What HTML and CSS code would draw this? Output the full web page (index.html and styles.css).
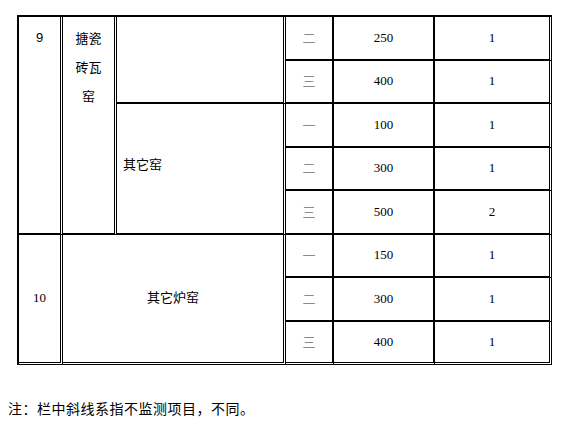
FILE: index.html
```html
<!DOCTYPE html>
<html lang="zh">
<head>
<meta charset="utf-8">
<title>表</title>
<link rel="stylesheet" href="styles.css">
</head>
<body>
<table class="grid">
  <tr>
    <td class="c1 top sans" rowspan="5">9</td>
    <td class="c2 top cn" rowspan="5">搪瓷砖瓦窑</td>
    <td class="c3" rowspan="2"></td>
    <td class="c4 lv">二</td>
    <td class="c5">250</td>
    <td class="c6">1</td>
  </tr>
  <tr>
    <td class="c4 lv">三</td>
    <td class="c5">400</td>
    <td class="c6">1</td>
  </tr>
  <tr>
    <td class="c3 left" rowspan="3">其它窑</td>
    <td class="c4 lv">一</td>
    <td class="c5">100</td>
    <td class="c6">1</td>
  </tr>
  <tr>
    <td class="c4 lv">二</td>
    <td class="c5">300</td>
    <td class="c6">1</td>
  </tr>
  <tr>
    <td class="c4 lv">三</td>
    <td class="c5">500</td>
    <td class="c6">2</td>
  </tr>
  <tr>
    <td class="c1 last" rowspan="3">10</td>
    <td class="c3 last" colspan="2" rowspan="3">其它炉窑</td>
    <td class="c4 lv">一</td>
    <td class="c5">150</td>
    <td class="c6">1</td>
  </tr>
  <tr>
    <td class="c4 lv">二</td>
    <td class="c5">300</td>
    <td class="c6">1</td>
  </tr>
  <tr>
    <td class="c4 lv last">三</td>
    <td class="c5 last">400</td>
    <td class="c6 last">1</td>
  </tr>
</table>
<p class="note">注：栏中斜线系指不监测项目，不同。</p>
</body>
</html>
```

FILE: styles.css
```css
html, body {
  margin: 0;
  padding: 0;
  background: #fff;
}

.grid {
  border-collapse: separate;
  border-spacing: 0;
  table-layout: fixed;
  width: 535px;
  margin: 15px 0 0 17px;
  border-left: 2px solid #000;
  border-top: 2px solid #000;
  font: 13px "Liberation Serif", "Noto Sans CJK SC", serif;
  color: #000;
}

.grid tr {
  height: 43.5px;
}

.grid td {
  box-sizing: border-box;
  padding: 0;
  text-align: center;
  vertical-align: middle;
  border-right: 2px solid #000;
  border-bottom: 2px solid #000;
  line-height: 16px;
}

.grid td.c1 { width: 44px; border-right: 3px double #000; }
.grid td.c2 { width: 54px; border-right: 3px double #000; padding: 0 10px; }
.grid td.c3 { width: 169px; border-right: 3px double #000; }
.grid td.c4 { width: 48px; }
.grid td.c5 { width: 101px; }
.grid td.c6 { width: 117px; border-right: 3px double #000; }

.grid td.last { border-bottom: 3px double #000; }

.grid td.top {
  vertical-align: top;
  line-height: 29px;
  padding-top: 6px;
}

.grid td.sans {
  font-family: "Liberation Sans", "Noto Sans CJK SC", sans-serif;
}

.grid td.cn {
  font-family: "Noto Sans CJK SC", sans-serif;
}

.grid td.left {
  text-align: left;
  padding-left: 6px;
  padding-bottom: 6px;
}

.grid td.lv {
  color: #8a8a8a;
  font-family: "Noto Sans CJK SC", sans-serif;
}

.note {
  margin: 33px 0 0 8px;
  font: 14px/20px "Noto Sans CJK SC", sans-serif;
  letter-spacing: 0.5px;
  color: #000;
}
```
